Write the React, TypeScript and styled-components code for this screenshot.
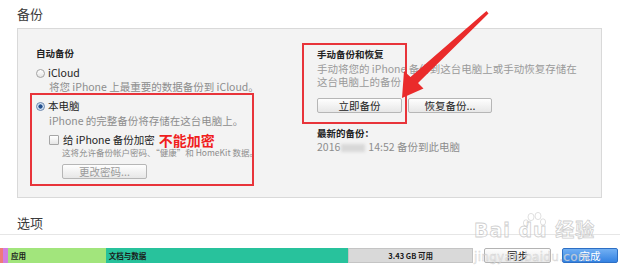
import React from "react";
import styled, { createGlobalStyle } from "styled-components";

const Global = createGlobalStyle`
  html, body { margin: 0; padding: 0; background: #ffffff; }
  body { font-family: "Noto Sans CJK SC", "Noto Sans", sans-serif; color: #333; }
  * { box-sizing: border-box; }
`;

const Page = styled.div`
  position: relative;
  width: 620px;
  height: 280px;
  overflow: hidden;
  background: #fff;
`;

const SectionTitle = styled.div<{ $top?: number }>`
  margin: ${(p) => p.$top ?? 0}px 0 0 17px;
  height: ${(p) => (p.$top ? 23 : 28)}px;
  line-height: ${(p) => (p.$top ? 24 : 28)}px;
  font-size: 13px;
  color: #3a3a3a;
`;

const Panel = styled.div`
  margin-left: 17px;
  width: 585px;
  height: 170px;
  background: #f3f3f3;
  border: 1px solid #d9d9d9;
  padding: 17px 0 0 18px;
  display: grid;
  grid-template-columns: 281px 1fr;
`;

const Column = styled.div`
  display: flex;
  flex-direction: column;
  align-items: flex-start;
`;

const GroupTitle = styled.div<{ $mt?: number }>`
  margin-top: ${(p) => p.$mt ?? 0}px;
  height: 14px;
  line-height: 14px;
  font-size: 9.5px;
  font-weight: 700;
  color: #222;
`;

const OptionRow = styled.div<{ $mt?: number; $indent?: number }>`
  display: flex;
  align-items: center;
  gap: 3px;
  margin-top: ${(p) => p.$mt ?? 0}px;
  padding-left: ${(p) => p.$indent ?? 0}px;
  height: 14px;
  line-height: 14px;
  font-size: 10.5px;
  color: #222;
`;

const Radio = styled.span<{ $checked?: boolean }>`
  width: 9px;
  height: 9px;
  border-radius: 50%;
  border: 1px solid ${(p) => (p.$checked ? "#6a86ad" : "#a3a3a3")};
  background: ${(p) =>
    p.$checked
      ? "radial-gradient(circle, #234f8c 0 1.8px, #c9dbf0 2.4px, #eef4fb 100%)"
      : "linear-gradient(#ffffff, #e4e4e4)"};
`;

const Check = styled.span`
  width: 10px;
  height: 10px;
  border: 1px solid #a6a6a6;
  border-radius: 1px;
  background: linear-gradient(#ffffff, #e6e6e6);
  margin-right: 1px;
`;

const Desc = styled.div<{ $indent?: number; $small?: boolean; $mt?: number }>`
  margin-top: ${(p) => p.$mt ?? 0}px;
  padding-left: ${(p) => p.$indent ?? 0}px;
  font-size: ${(p) => (p.$small ? 8.5 : 10.5)}px;
  line-height: ${(p) => (p.$small ? 12 : 14)}px;
  color: #8d8d8d;
  white-space: nowrap;
`;

const RightDesc = styled.div`
  margin-top: 1px;
  width: 270px;
  font-size: 10.5px;
  line-height: 13px;
  color: #9a9a9a;
`;

const Warn = styled.span`
  margin-left: 1px;
  font-size: 14px;
  line-height: 14px;
  font-weight: 700;
  color: #f01e1e;
`;

const ButtonRow = styled.div<{ $mt?: number; $indent?: number }>`
  display: flex;
  gap: 6px;
  margin-top: ${(p) => p.$mt ?? 0}px;
  padding-left: ${(p) => p.$indent ?? 0}px;
`;

const PanelButton = styled.div<{ $w: number; $disabled?: boolean }>`
  width: ${(p) => p.$w}px;
  height: 15px;
  border: 1px solid #b6b6b6;
  border-radius: 2px;
  background: linear-gradient(#fefefe, #e7e7e7);
  font-size: 10.5px;
  line-height: 13px;
  text-align: center;
  color: ${(p) => (p.$disabled ? "#9b9b9b" : "#222")};
`;

const Blurred = styled.span`
  display: inline-block;
  width: 24px;
  height: 8px;
  margin: 0 3px 0 1px;
  vertical-align: -1px;
  background: #d8d8d8;
  filter: blur(1.5px);
`;

const DateLine = styled.div`
  height: 13px;
  line-height: 13px;
  font-size: 10.5px;
  color: #8d8d8d;
`;

const Divider = styled.div`
  height: 1px;
  background: #e6e6e6;
`;

const BottomBar = styled.div`
  margin-top: 13px;
  display: flex;
  align-items: center;
  gap: 11px;
  height: 15px;
`;

const Storage = styled.div`
  display: flex;
  width: 473px;
  height: 15px;
`;

const Segment = styled.div<{ $w: number; $bg: string; $center?: boolean; $border?: boolean }>`
  width: ${(p) => p.$w}px;
  height: 15px;
  background: ${(p) => p.$bg};
  border: ${(p) => (p.$border ? "1px solid #c4c4c4" : "none")};
  font-size: 7.5px;
  font-weight: 700;
  line-height: ${(p) => (p.$border ? 13 : 15)}px;
  color: #1a1a1a;
  padding-left: ${(p) => (p.$center ? 0 : 3)}px;
  text-align: ${(p) => (p.$center ? "center" : "left")};
  white-space: nowrap;
`;

const BarButton = styled.div<{ $w: number; $primary?: boolean }>`
  width: ${(p) => p.$w}px;
  height: 15px;
  border-radius: 2px;
  border: 1px solid ${(p) => (p.$primary ? "#2d6fc4" : "#b3b3b3")};
  background: ${(p) =>
    p.$primary ? "linear-gradient(#72b0f3, #3482e2)" : "linear-gradient(#fdfdfd, #e9e9e9)"};
  color: ${(p) => (p.$primary ? "#fff" : "#222")};
  font-size: 10.5px;
  line-height: 13px;
  text-align: center;
`;

const RedBox = styled.div<{ $l: number; $t: number; $w: number; $h: number }>`
  position: absolute;
  left: ${(p) => p.$l}px;
  top: ${(p) => p.$t}px;
  width: ${(p) => p.$w}px;
  height: ${(p) => p.$h}px;
  border: 2px solid #e8343a;
  pointer-events: none;
`;

const Overlay = styled.svg`
  position: absolute;
  left: 0;
  top: 0;
  pointer-events: none;
`;

const Watermark = styled.div`
  position: absolute;
  left: 474px;
  top: 219px;
  pointer-events: none;
  font-family: "DejaVu Sans", "Noto Sans CJK SC", sans-serif;
`;

const WmBig = styled.div`
  font-size: 19px;
  line-height: 22px;
  font-weight: 700;
  letter-spacing: 1px;
  color: rgba(255, 255, 255, 0.35);
  -webkit-text-stroke: 0.8px rgba(190, 190, 190, 0.75);
`;

const WmSmall = styled.div`
  margin-top: 10px;
  font-size: 12px;
  line-height: 13px;
  letter-spacing: 0.3px;
  color: rgba(235, 235, 235, 0.7);
  -webkit-text-stroke: 0.4px rgba(185, 185, 185, 0.6);
`;

export default function App() {
  return (
    <Page>
      <Global />
      <SectionTitle>备份</SectionTitle>
      <Panel>
        <Column>
          <GroupTitle>自动备份</GroupTitle>
          <OptionRow $mt={6}>
            <Radio />
            <span>iCloud</span>
          </OptionRow>
          <Desc $indent={13}>将您 iPhone 上最重要的数据备份到 iCloud。</Desc>
          <OptionRow $mt={5}>
            <Radio $checked />
            <span>本电脑</span>
          </OptionRow>
          <Desc $indent={13} $mt={1}>iPhone 的完整备份将存储在这台电脑上。</Desc>
          <OptionRow $mt={5} $indent={13}>
            <Check />
            <span>给 iPhone 备份加密</span>
            <Warn>不能加密</Warn>
          </OptionRow>
          <Desc $indent={26} $small $mt={-1}>这将允许备份帐户密码、“健康”和 HomeKit 数据。</Desc>
          <ButtonRow $mt={6} $indent={26}>
            <PanelButton $w={85} $disabled>更改密码...</PanelButton>
          </ButtonRow>
        </Column>
        <Column>
          <GroupTitle $mt={1}>手动备份和恢复</GroupTitle>
          <RightDesc>手动将您的 iPhone 备份到这台电脑上或手动恢复存储在这台电脑上的备份</RightDesc>
          <ButtonRow $mt={10}>
            <PanelButton $w={85}>立即备份</PanelButton>
            <PanelButton $w={84}>恢复备份...</PanelButton>
          </ButtonRow>
          <GroupTitle $mt={13}>最新的备份：</GroupTitle>
          <DateLine>
            2016<Blurred />14:52 备份到此电脑
          </DateLine>
        </Column>
      </Panel>
      <SectionTitle $top={13}>选项</SectionTitle>
      <Divider />
      <BottomBar>
        <Storage>
          <Segment $w={2} $bg="#f07a7a" />
          <Segment $w={5} $bg="#d27ee0" />
          <Segment $w={98} $bg="#a2e57c">应用</Segment>
          <Segment $w={243} $bg="#28c29c">文档与数据</Segment>
          <Segment $w={125} $bg="#d9d9d9" $center $border>3.43 GB 可用</Segment>
        </Storage>
        <BarButton $w={67}>同步</BarButton>
        <BarButton $w={56} $primary>完成</BarButton>
      </BottomBar>

      <RedBox $l={30} $t={93} $w={224} $h={93} />
      <RedBox $l={302} $t={43} $w={105} $h={81} />
      <Overlay width="620" height="280" viewBox="0 0 620 280">
        <polygon
          points="486.5,11 488.5,13.5 418,83 423.5,88.5 402,98 404,71 410.5,77"
          fill="#ea2b2b"
        />
        <g fill="none" stroke="rgba(200,200,200,0.7)" strokeWidth="0.8">
          <ellipse cx="531" cy="217" rx="3" ry="3.6" />
          <ellipse cx="538" cy="216" rx="3" ry="3.6" />
          <ellipse cx="526" cy="223" rx="2.6" ry="3.2" />
          <ellipse cx="543" cy="222" rx="2.6" ry="3.2" />
        </g>
      </Overlay>
      <Watermark>
        <WmBig>Bai du 经验</WmBig>
        <WmSmall>jingyan.baidu.com</WmSmall>
      </Watermark>
    </Page>
  );
}
